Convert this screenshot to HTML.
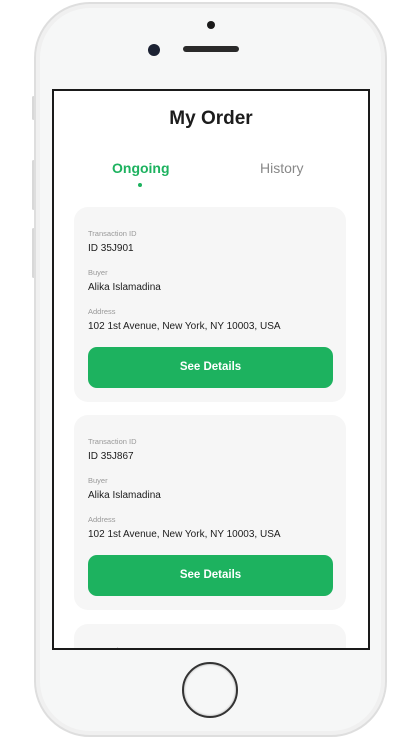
<!DOCTYPE html>
<html style="overflow:hidden"><head><meta charset="utf-8"><style>
*{margin:0;padding:0;box-sizing:border-box}
html,body{width:418px;height:739px;overflow:hidden}
body{background:#fff;position:relative;font-family:"Liberation Sans",sans-serif}
.phone{position:absolute;left:34px;top:2px;width:353px;height:735px;border-radius:56px;background:#f6f7f7;border:2px solid #dedede;box-shadow:inset 0 0 0 4px #f0f0f0}
.btn{position:absolute;left:32px;width:3px;background:#d8d8d8;border-radius:2px}
.screen{position:absolute;left:52px;top:89px;width:318px;height:561px;border:2px solid #1a1a1a;background:#fff;overflow:hidden}
.title{position:absolute;top:17px;width:100%;text-align:center;font-size:19px;font-weight:bold;color:#1c1c1c}
.tab{position:absolute;top:69px;font-size:14px}
.dot{position:absolute;left:84px;top:92px;width:4px;height:4px;border-radius:50%;background:#1db25f}
.card{position:absolute;left:20px;width:272px;height:195px;background:#f6f6f6;border-radius:14px}
.lbl{position:absolute;left:14px;font-size:7.5px;color:#999}
.val{position:absolute;left:14px;font-size:10px;color:#1c1c1c}
.sd{position:absolute;left:14px;top:140px;width:245px;height:41px;background:#1db25f;border-radius:9px;color:#fff;font-weight:bold;font-size:11.5px;text-align:center;line-height:41px}
</style></head><body>
<div class="btn" style="top:96px;height:24px"></div>
<div class="btn" style="top:160px;height:50px"></div>
<div class="btn" style="top:228px;height:50px"></div>
<div class="phone"></div>
<div style="position:absolute;left:207px;top:21px;width:8px;height:8px;border-radius:50%;background:#1a1a1a"></div>
<div style="position:absolute;left:148px;top:44px;width:12px;height:12px;border-radius:50%;background:#1c2233"></div>
<div style="position:absolute;left:183px;top:46px;width:56px;height:6px;border-radius:3px;background:#2a2a2a"></div>
<div style="position:absolute;left:182px;top:662px;width:56px;height:56px;border-radius:50%;border:2px solid #333;box-shadow:inset 0 0 2px #999"></div>
<div class="screen">
 <div class="title">My Order</div>
 <div class="tab" style="left:58px;color:#1db25f;font-weight:bold">Ongoing</div>
 <div class="tab" style="left:206px;color:#888">History</div>
 <div class="dot"></div>
 <div class="card" style="top:116px">
  <div class="lbl" style="top:22px">Transaction ID</div>
  <div class="val" style="top:36px">ID 35J901</div>
  <div class="lbl" style="top:61px">Buyer</div>
  <div class="val" style="top:75px">Alika Islamadina</div>
  <div class="lbl" style="top:100px">Address</div>
  <div class="val" style="top:114px">102 1st Avenue, New York, NY 10003, USA</div>
  <div class="sd">See Details</div>
 </div>
 <div class="card" style="top:324px">
  <div class="lbl" style="top:22px">Transaction ID</div>
  <div class="val" style="top:36px">ID 35J867</div>
  <div class="lbl" style="top:61px">Buyer</div>
  <div class="val" style="top:75px">Alika Islamadina</div>
  <div class="lbl" style="top:100px">Address</div>
  <div class="val" style="top:114px">102 1st Avenue, New York, NY 10003, USA</div>
  <div class="sd">See Details</div>
 </div>
 <div class="card" style="top:533px">
  <div class="lbl" style="top:22px">Transaction ID</div>
 </div>
</div>
</body></html>
